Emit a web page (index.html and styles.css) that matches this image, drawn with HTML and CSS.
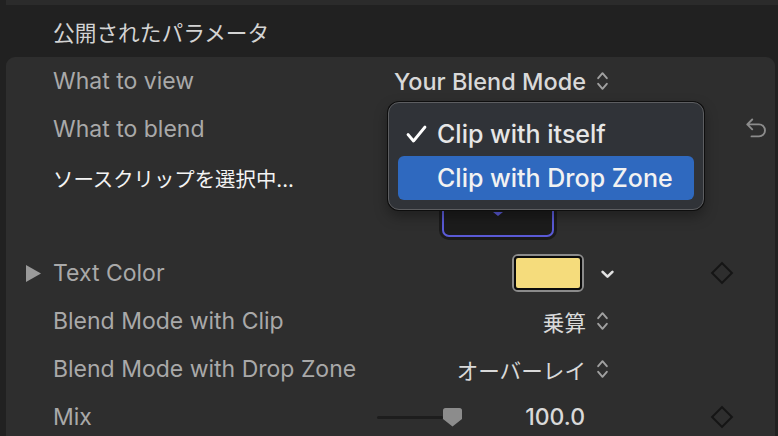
FILE: index.html
```html
<!DOCTYPE html>
<html lang="ja">
<head>
<meta charset="utf-8">
<title>公開されたパラメータ</title>
<link rel="stylesheet" href="styles.css">
</head>
<body>
<div class="top-strip"></div>
<div class="section-title">公開されたパラメータ</div>
<div class="panel">
  <div class="row">
    <span class="disc"></span>
    <span class="label">What to view</span>
    <span class="value">Your Blend Mode</span>
    <span class="chev"><svg class="updown" width="11" height="20" viewBox="0 0 11 20"><path d="M1.2 7.2 L5.5 2.2 L9.8 7.2 M1.2 12.8 L5.5 17.8 L9.8 12.8"/></svg></span>
    <span></span><span class="kf"></span><span class="reset"></span>
  </div>
  <div class="row">
    <span class="disc"></span>
    <span class="label">What to blend</span>
    <span class="value"></span>
    <span class="chev"></span>
    <span></span><span class="kf"></span>
    <span class="reset"><svg width="21" height="22" viewBox="0 0 21 22"><path d="M6.2 1.5 L1.3 6.4 L6.2 11.3 M1.3 6.4 H13 A6 6 0 0 1 13 18.4 H5.5"/></svg></span>
  </div>
  <div class="row row-tall">
    <span class="disc"></span>
    <span class="label label-strong">ソースクリップを選択中...</span>
    <span class="value value-drop">
      <span class="drop-zone"><span class="drop-marker"></span></span>
    </span>
    <span class="chev"></span>
    <span></span><span class="kf"></span><span class="reset"></span>
  </div>
  <div class="row">
    <span class="disc"><svg width="15" height="17" viewBox="0 0 15 17"><path d="M0 0 L15 8.5 L0 17 Z"/></svg></span>
    <span class="label">Text Color</span>
    <span class="value"><span class="swatch"><span class="swatch-fill"></span></span></span>
    <span class="chev chev-down"><svg width="13" height="9" viewBox="0 0 13 9"><path d="M1.6 1.8 L6.5 6.7 L11.4 1.8"/></svg></span>
    <span></span><span class="kf"><span class="diamond"></span></span><span class="reset"></span>
  </div>
  <div class="row">
    <span class="disc"></span>
    <span class="label">Blend Mode with Clip</span>
    <span class="value cjk">乗算</span>
    <span class="chev"><svg class="updown" width="11" height="20" viewBox="0 0 11 20"><path d="M1.2 7.2 L5.5 2.2 L9.8 7.2 M1.2 12.8 L5.5 17.8 L9.8 12.8"/></svg></span>
    <span></span><span class="kf"></span><span class="reset"></span>
  </div>
  <div class="row">
    <span class="disc"></span>
    <span class="label">Blend Mode with Drop Zone</span>
    <span class="value cjk">オーバーレイ</span>
    <span class="chev"><svg class="updown" width="11" height="20" viewBox="0 0 11 20"><path d="M1.2 7.2 L5.5 2.2 L9.8 7.2 M1.2 12.8 L5.5 17.8 L9.8 12.8"/></svg></span>
    <span></span><span class="kf"></span><span class="reset"></span>
  </div>
  <div class="row">
    <span class="disc"></span>
    <span class="label">Mix</span>
    <span class="value value-slider">
      <span class="slider"><span class="track"></span><svg class="thumb" width="19" height="19" viewBox="0 0 19 19"><path d="M2.5 0 H16.5 A2.5 2.5 0 0 1 19 2.5 V11 L9.5 18.5 L0 11 V2.5 A2.5 2.5 0 0 1 2.5 0 Z"/></svg></span>
      <span class="number">100.0</span>
    </span>
    <span class="chev"></span>
    <span></span><span class="kf"><span class="diamond"></span></span><span class="reset"></span>
  </div>
</div>

<div class="popup">
  <div class="menu-item checked">
    <svg class="check" width="21" height="18" viewBox="0 0 21 18"><path d="M2 9.5 L7.5 16 L19 2"/></svg>
    Clip with itself
  </div>
  <div class="menu-item selected">Clip with Drop Zone</div>
</div>
</body>
</html>
```

FILE: styles.css
```css
html, body {
  margin: 0;
  padding: 0;
}

body {
  position: relative;
  width: 778px;
  height: 436px;
  overflow: hidden;
  background: #212121;
  font-family: "Inter", "Noto Sans CJK JP", sans-serif;
  color: #a7a7a7;
}

.top-strip {
  height: 5px;
  margin-left: 6px;
  background: #2b2b2b;
}

.section-title {
  height: 52px;
  display: flex;
  align-items: center;
  padding-left: 53px;
  font-family: "Noto Sans CJK JP", sans-serif;
  font-size: 21.7px;
  color: #d3d3d3;
}

.panel {
  margin: 0 3px 0 6px;
  height: 379px;
  background: #2e2e2e;
  border-radius: 9px 9px 0 0;
}

.row {
  display: grid;
  grid-template-columns: 47px 1fr 216px 34px 82px 40px 33px;
  height: 48px;
  align-items: center;
}

.row-tall {
  height: 96px;
  align-items: start;
}

.disc {
  display: flex;
  justify-content: flex-end;
  padding-right: 12px;
}

.disc svg path {
  fill: #9a9a9a;
}

.label {
  font-size: 23px;
  line-height: 48px;
  white-space: nowrap;
  color: #a9a9a9;
}

.label-strong {
  font-size: 20.4px;
  color: #f4f4f4;
  padding-top: 3px;
}

.value {
  display: flex;
  justify-content: flex-end;
  align-items: center;
  font-size: 23.5px;
  font-weight: 500;
  color: #d9d9d9;
  white-space: nowrap;
}

.value.cjk {
  font-size: 21.6px;
  font-weight: 400;
}

.chev {
  display: flex;
  align-items: center;
  padding-left: 11px;
}

.chev-down {
  padding-left: 15px;
  padding-top: 2px;
}

.updown path {
  fill: none;
  stroke: #a0a0a0;
  stroke-width: 1.9;
  stroke-linecap: round;
  stroke-linejoin: round;
}

.chev-down path {
  fill: none;
  stroke: #e2e2e2;
  stroke-width: 2.6;
  stroke-linecap: round;
  stroke-linejoin: round;
}

.kf {
  display: flex;
  justify-content: center;
  align-items: center;
}

.diamond {
  width: 12px;
  height: 12px;
  border: 2px solid #151515;
  transform: rotate(45deg);
}

.reset {
  display: flex;
  align-items: center;
  padding-left: 4px;
}

.reset path {
  fill: none;
  stroke: #8c8c8c;
  stroke-width: 1.9;
  stroke-linecap: round;
  stroke-linejoin: round;
}

/* drop zone */
.value-drop {
  justify-content: flex-start;
  padding-left: 72px;
  padding-top: 8px;
}

.drop-zone {
  position: relative;
  display: block;
  width: 108px;
  height: 72px;
  border: 2px solid #5a5ad6;
  border-radius: 7px;
  background: #1c1c1c;
  box-shadow: 0 0 0 3px #1b1b1b;
}

.drop-marker {
  position: absolute;
  left: 49px;
  bottom: 19px;
  width: 0;
  height: 0;
  border-left: 5px solid transparent;
  border-right: 5px solid transparent;
  border-top: 4px solid #5a5ad6;
}

/* swatch */
.swatch {
  display: block;
  width: 68px;
  height: 34px;
  margin-right: 2px;
  border: 2px solid #8b8b8b;
  border-radius: 6px;
}

.swatch-fill {
  display: block;
  height: 100%;
  box-sizing: border-box;
  border: 2px solid #0b0b0b;
  border-radius: 4px;
  background: #f5dc7c;
}

/* slider */
.value-slider {
  justify-content: space-between;
  padding-left: 7px;
  padding-right: 1px;
}

.slider {
  display: flex;
  align-items: center;
}

.track {
  display: block;
  width: 66px;
  height: 3px;
  background: #1d1d1d;
  border-radius: 2px;
}

.thumb {
  margin-top: 1px;
}

.thumb path {
  fill: #8c8c8c;
}

.number {
  font-size: 23px;
  font-weight: 500;
  color: #d9d9d9;
}

/* popup menu */
.popup {
  position: absolute;
  left: 388px;
  top: 102px;
  width: 296px;
  padding: 9px;
  border: 1px solid #5d5e61;
  border-radius: 11px;
  background: #303338;
  box-shadow: 0 0 0 1px #0e0e0e, 0 6px 14px rgba(0, 0, 0, 0.35);
}

.menu-item {
  position: relative;
  height: 44px;
  display: flex;
  align-items: center;
  padding-left: 39px;
  font-size: 25px;
  font-weight: 500;
  color: #e6e6e6;
  border-radius: 6px;
}

.menu-item.selected {
  background: #2f69bf;
  color: #f2f2f2;
}

.check {
  position: absolute;
  left: 8px;
  top: 13px;
}

.check path {
  fill: none;
  stroke: #ffffff;
  stroke-width: 2.8;
  stroke-linecap: round;
  stroke-linejoin: round;
}
```
